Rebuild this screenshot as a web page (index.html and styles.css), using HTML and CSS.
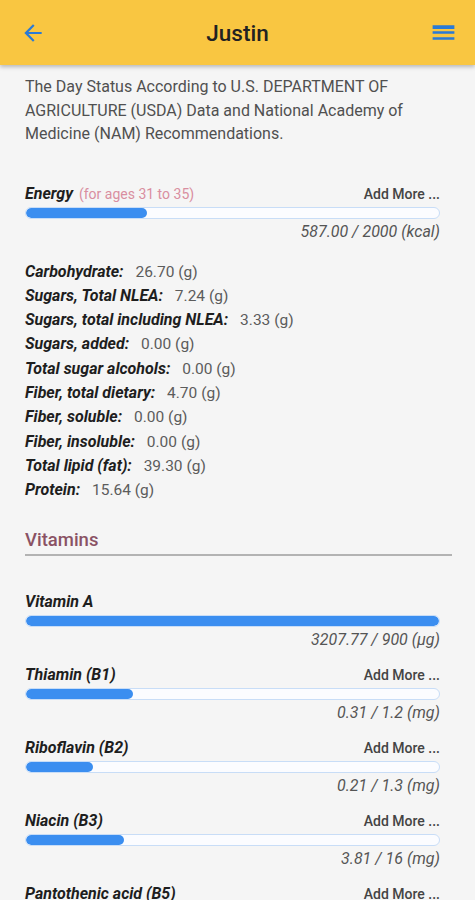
FILE: index.html
```html
<!DOCTYPE html>
<html lang="en">
<head>
  <meta charset="UTF-8">
  <meta name="viewport" content="width=device-width, initial-scale=1.0">
  <title>Justin</title>
  <link rel="stylesheet" href="styles.css">
</head>
<body>

  <header class="app-bar">
    <svg class="icon-back" viewBox="0 0 24 24" width="26" height="26"><path d="M20 11H7.83l5.59-5.59L12 4l-8 8 8 8 1.41-1.41L7.83 13H20v-2z"/></svg>
    <h1 class="app-title">Justin</h1>
    <svg class="icon-menu" viewBox="0 0 24 24" width="29" height="29"><path d="M3 18h18v-2H3v2zm0-5h18v-2H3v2zm0-6v2h18V6H3z"/></svg>
  </header>

  <main class="content">
    <p class="intro">The Day Status According to U.S. DEPARTMENT OF AGRICULTURE (USDA) Data and National Academy of Medicine (NAM) Recommendations.</p>

    <div class="nutrient energy">
      <div class="nutrient-head">
        <span class="nutrient-name">Energy <span class="ages">(for ages 31 to 35)</span></span>
        <span class="add-more">Add More ...</span>
      </div>
      <div class="bar"><div class="bar-fill" style="width: 29.35%"></div></div>
      <div class="nutrient-value">587.00 / 2000 (kcal)</div>
    </div>

    <ul class="facts">
      <li><b>Carbohydrate:</b> 26.70 (g)</li>
      <li><b>Sugars, Total NLEA:</b> 7.24 (g)</li>
      <li><b>Sugars, total including NLEA:</b> 3.33 (g)</li>
      <li><b>Sugars, added:</b> 0.00 (g)</li>
      <li><b>Total sugar alcohols:</b> 0.00 (g)</li>
      <li><b>Fiber, total dietary:</b> 4.70 (g)</li>
      <li><b>Fiber, soluble:</b> 0.00 (g)</li>
      <li><b>Fiber, insoluble:</b> 0.00 (g)</li>
      <li><b>Total lipid (fat):</b> 39.30 (g)</li>
      <li><b>Protein:</b> 15.64 (g)</li>
    </ul>

    <h2 class="section-title">Vitamins</h2>

    <div class="nutrient">
      <div class="nutrient-head">
        <span class="nutrient-name">Vitamin A</span>
      </div>
      <div class="bar"><div class="bar-fill" style="width: 100%"></div></div>
      <div class="nutrient-value">3207.77 / 900 (µg)</div>
    </div>

    <div class="nutrient">
      <div class="nutrient-head">
        <span class="nutrient-name">Thiamin (B1)</span>
        <span class="add-more">Add More ...</span>
      </div>
      <div class="bar"><div class="bar-fill" style="width: 25.8%"></div></div>
      <div class="nutrient-value">0.31 / 1.2 (mg)</div>
    </div>

    <div class="nutrient">
      <div class="nutrient-head">
        <span class="nutrient-name">Riboflavin (B2)</span>
        <span class="add-more">Add More ...</span>
      </div>
      <div class="bar"><div class="bar-fill" style="width: 16.2%"></div></div>
      <div class="nutrient-value">0.21 / 1.3 (mg)</div>
    </div>

    <div class="nutrient">
      <div class="nutrient-head">
        <span class="nutrient-name">Niacin (B3)</span>
        <span class="add-more">Add More ...</span>
      </div>
      <div class="bar"><div class="bar-fill" style="width: 23.8%"></div></div>
      <div class="nutrient-value">3.81 / 16 (mg)</div>
    </div>

    <div class="nutrient">
      <div class="nutrient-head">
        <span class="nutrient-name">Pantothenic acid (B5)</span>
        <span class="add-more">Add More ...</span>
      </div>
      <div class="bar"><div class="bar-fill" style="width: 20%"></div></div>
      <div class="nutrient-value">1.00 / 5 (mg)</div>
    </div>
  </main>

</body>
</html>
```

FILE: styles.css
```css
body {
  margin: 0;
  background-color: #f5f5f5;
  font-family: Roboto, "Liberation Sans", sans-serif;
  color: #444;
  overflow: hidden;
}

.app-bar {
  display: flex;
  align-items: center;
  height: 65px;
  padding: 0 17px 0 20px;
  background-color: #f9c641;
  box-shadow: 0 2px 4px rgba(0, 0, 0, 0.25);
}

.icon-back,
.icon-menu {
  fill: #2a7ad6;
  flex: none;
}

.app-title {
  flex: 1;
  margin: 0;
  text-align: center;
  font-size: 22.5px;
  font-weight: 500;
  color: #222;
}

.content {
  padding: 10px 35px 0 25px;
}

.intro {
  margin: 0;
  font-size: 16px;
  line-height: 23.5px;
  color: #505050;
}

.nutrient {
  margin-bottom: 15px;
}

.energy {
  margin-top: 38px;
  margin-bottom: 18px;
}

.nutrient-head {
  display: flex;
  justify-content: space-between;
  align-items: center;
  height: 20px;
}

.nutrient-name {
  font-size: 16px;
  font-weight: bold;
  font-style: italic;
  color: #1e1e1e;
}

.ages {
  margin-left: 2px;
  font-size: 14px;
  font-weight: normal;
  font-style: normal;
  color: #d98ea0;
}

.add-more {
  font-size: 14px;
  font-weight: 500;
  color: #444;
}

.bar {
  height: 12px;
  margin-top: 3px;
  box-sizing: border-box;
  border: 1px solid #c8ddf7;
  border-radius: 6px;
  background-color: #fbfcff;
  overflow: hidden;
}

.bar-fill {
  height: 100%;
  border-radius: 6px;
  background-color: #3b8ef0;
}

.nutrient-value {
  margin-top: 3px;
  height: 20px;
  line-height: 20px;
  text-align: right;
  font-size: 16px;
  font-style: italic;
  color: #555;
}

.facts {
  list-style: none;
  margin: 0;
  padding: 0;
}

.facts li {
  font-size: 15.5px;
  line-height: 24.33px;
  color: #5c5c5c;
}

.facts b {
  font-size: 16px;
  font-style: italic;
  color: #1e1e1e;
  margin-right: 8px;
}

.section-title {
  margin: 25px -12px 36px 0;
  padding-bottom: 2px;
  border-bottom: 2px solid #b3b3b3;
  font-size: 18.5px;
  line-height: 24px;
  font-weight: 500;
  color: #8a5264;
}
```
